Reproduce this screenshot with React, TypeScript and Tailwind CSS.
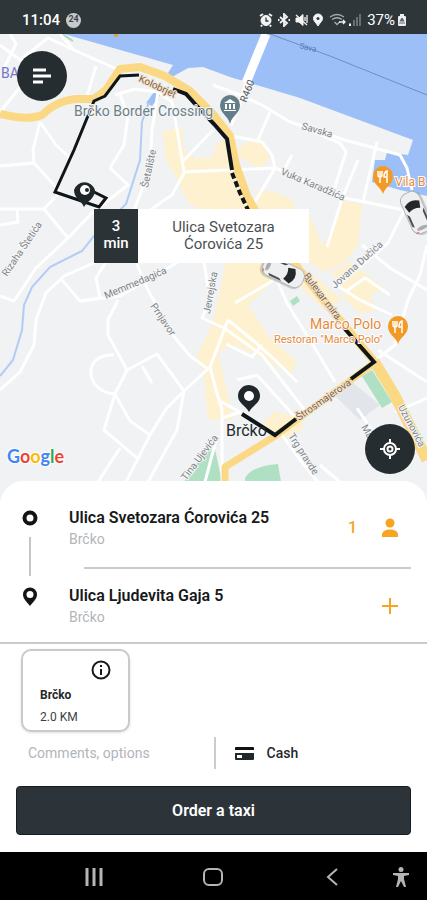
import React, { useState } from 'react';

const minorRoads = [
  'M0 45 L20 60 L48 38 L74 50 L110 66 L122 72',
  'M10 34 L16 44 L4 68',
  'M60 34 L74 50',
  'M96 66 L86 100',
  'M0 112 L30 75',
  'M40 122 L33 150 L34 163 L45 175 L60 192',
  'M40 122 L56 145 L72 160',
  'M0 166 L34 163',
  'M0 209 L44 209 L60 192',
  'M0 225 L18 222 L17 210',
  'M44 209 L68 238',
  'M110 168 L128 185 L92 213 L68 238 L36 268 L14 301 L0 296',
  'M110 168 L124 145 L128 115 L120 95',
  'M115 95 L135 89 L158 92 L172 102 L178 135 L184 172',
  'M158 92 L152 130 L150 168 L135 208 L96 262 L64 276 L46 293 L36 320 L34 345 L20 372 L0 390',
  'M62 280 L80 301 L100 298 L96 278 L106 262',
  'M80 301 L120 296 L178 262',
  'M118 300 L108 320 L108 335 L127 370 L115 394 L104 430 L137 458',
  'M114 355 C82 353 84 392 115 394',
  'M127 370 L157 354 L184 391 L210 367',
  'M136 262 L148 290 L172 334 L190 356 L208 369',
  'M142 366 L152 383',
  'M115 394 L130 421 L150 435',
  'M184 391 L166 409 L150 435 L126 482',
  'M184 391 L177 430 L148 482',
  'M120 448 L98 482',
  'M182 162 L213 130',
  'M184 172 L275 168 L345 198 L404 210',
  'M184 173 L172 195 L150 210',
  'M213 85 L240 95 L262 105 L290 122 L345 140 L400 155 L407 168 L412 190',
  'M270 112 L258 140',
  'M232 136 L262 142 L272 155 L275 168 L252 207',
  'M285 168 L292 155',
  'M300 126 L340 143 L346 152 L334 190',
  'M358 160 L342 199 L327 247',
  'M377 142 L363 202',
  'M404 211 L388 243 L335 288',
  'M362 245 L390 268 L427 290',
  'M427 245 L420 275 L408 300 L395 345 L376 360',
  'M333 283 L360 300 L392 315',
  'M345 292 L365 278 L390 295',
  'M274 280 L235 303',
  'M274 274 L288 305 L313 345 L335 382',
  'M204 262 L210 300 L202 318 L224 328 L262 355 L306 412',
  'M228 320 L210 367 L216 390 L222 410 L222 482',
  'M228 320 L255 342 L275 360 L297 382',
  'M226 344 L252 357 L262 345',
  'M237 380 L257 375 L296 418',
  'M218 400 L240 412 L222 418',
  'M280 432 L300 460 L318 482',
  'M320 465 L340 482',
  'M357 408 L375 435',
  'M378 350 L427 382',
  'M395 412 L427 398',
  'M205 482 L216 440',
];

const streetLabels = [
  { text: 'Savska', x: 301, y: 129, r: 16 },
  { text: 'Vuka Karadžića', x: 280, y: 174, r: 23 },
  { text: 'Jovana Dučića', x: 335, y: 289, r: -42 },
  { text: 'Rizaha Štetića', x: 7, y: 277, r: -56 },
  { text: 'Memmedagića', x: 106, y: 299, r: -23 },
  { text: 'Jevrejska', x: 210, y: 314, r: -80 },
  { text: 'Prnjavor', x: 150, y: 306, r: 56 },
  { text: 'Šetalište', x: 148, y: 188, r: -78 },
  { text: 'Tina Ujevića', x: 186, y: 481, r: -53 },
  { text: 'Trg pravde', x: 288, y: 436, r: 57 },
  { text: 'Uzunovića', x: 398, y: 407, r: 62 },
  { text: 'Marije', x: 361, y: 427, r: 60 },
];

const routeLabels = [
  { text: 'Kolobrjet', x: 138, y: 81, r: 25 },
  { text: 'Bulevar mira', x: 303, y: 276, r: 53 },
  { text: 'Štrosmajerova', x: 299, y: 421, r: -35 },
];

function Car() {
  return (
    <g>
      <rect x="-9" y="-21" width="21" height="44" rx="8" fill="#00000028" />
      <rect x="-10" y="-22" width="20" height="43" rx="8" fill="#eeeff0" stroke="#b4b7ba" strokeWidth="1" />
      <path d="M-8 -10 Q0 -16 8 -10 L6 -3 Q0 -6 -6 -3Z" fill="#24282b" />
      <path d="M-9 -2 L-7 1 V13 L-9 11Z M9 -2 L7 1 V13 L9 11Z" fill="#4a4f54" />
      <path d="M-5 15 Q0 13 5 15 L6 17 Q0 19 -6 17Z" fill="#a9adb1" />
      <path d="M-8 19 H-5 M5 19 H8" stroke="#dc7777" strokeWidth="1.5" />
    </g>
  );
}

function FoodPin() {
  return (
    <g>
      <path d="M0 15 C-2 8 -10 6 -10 -3 A10 10 0 0 1 10 -3 C10 6 2 8 0 15Z" fill="#f39a26" />
      <path d="M-5 -8 V-4 Q-5 -2 -3 -2 Q-1 -2 -1 -4 V-8 M-3 -8 V4 M4 4 V-8 Q1 -7 1 -2 H4" fill="none" stroke="#fff" strokeWidth="1.5" />
    </g>
  );
}

function CityMap() {
  return (
    <svg className="absolute inset-0 w-full h-full" viewBox="0 34 427 467" preserveAspectRatio="xMidYMin slice" fontFamily="Roboto, sans-serif" role="img" aria-label="Brčko">
      <rect x="0" y="34" width="427" height="467" fill="#f0f2f3" />

      {/* Built-up areas and parks */}
      <g fill="#fdf1cf">
        <path d="M163 131 L182 128 L184 150 L195 158 L212 158 L217 143 L226 138 L234 150 L238 185 L255 212 L205 212 L188 203 L181 188 L175 175 L166 160Z" />
        <path d="M236 150 L250 140 L265 145 L270 160 L260 168 L240 158Z" />
        <path d="M255 190 L275 192 L292 200 L295 209 L309 213 L322 245 L332 230 L343 200 L362 205 L358 245 L345 262 L325 272 L308 262 L290 225 L260 210Z" />
        <path d="M226 262 L270 262 L275 280 L248 305 L270 338 L297 361 L291 374 L262 358 L235 345 L218 352 L228 395 L233 420 L208 420 L204 375 L197 355 L212 325Z" />
        <path d="M298 285 L310 272 L342 300 L325 310Z" />
        <path d="M332 272 L350 262 L384 288 L370 295 L375 310 L360 314 L345 298Z" />
        <path d="M262 425 L275 411 L292 416 L304 424 L300 432 L280 440Z" />
      </g>
      <g fill="#b0e0c3">
        <path d="M213 440 L222 482 L184 482Z" />
        <path d="M245 478 Q252 466 278 464 L281 482 L245 482Z" />
        <path d="M362 376 L372 370 L392 402 L382 408Z" />
        <path d="M290 301 L297 296 L300 301 L293 306Z" />
      </g>
      <path d="M332 393 L352 382 L380 405 L360 420Z" fill="#e2e5e9" />

      {/* Sava and its stream */}
      <path d="M64 34 L173 65 L168 73 L172 77 L188 68 L203 67 L230 77 L300 98 L413 140 L408 155 L427 160 V34Z" fill="#9dbff8" />
      <path d="M375 160 L385 160 L387 152 L408 155 L427 150 V196 L400 190 L372 182Z" fill="#9dbff8" />
      <path d="M157 88 L164 90 L152 106 L146 103Z" fill="#9dbff8" />
      <path d="M149 102 L142 122 L140 160 L126 204 L94 236 L82 251 L50 267 L32 287 L24 305 L22 330 L13 360 L0 376" fill="none" stroke="#b3cbf7" strokeWidth="2" />
      <path d="M270 34 L330 56 L427 95" fill="none" stroke="#738dbc" strokeWidth="1" />
      <path d="M62 34 L73 41" fill="none" stroke="#a6d7c2" strokeWidth="2" />

      <g fill="none" stroke="#fff" strokeWidth="3" strokeLinejoin="round">
        {minorRoads.map((d) => <path key={d} d={d} />)}
      </g>
      <path d="M266 34 L246 83" stroke="#fff" strokeWidth="9" />
      <path d="M248 80 L231 125" stroke="#fff" strokeWidth="4" />

      {/* Main road */}
      <g fill="none" stroke="#fbd884" strokeLinejoin="round">
        <path d="M0 114 Q28 121 42 115 Q56 101 75 99 L94 99 L106 90 L120 69 L140 67 L165 76 L190 91 L213 114 L230 136 L236 165 L247 196 L258 215 L298 268 L330 308 L374 361" strokeWidth="8" />
        <path d="M374 361 L394 394 L427 460" strokeWidth="11" />
        <path d="M374 363 L275 436 L225 467 V484" strokeWidth="7" />
      </g>
      <circle cx="116" cy="35" r="2" fill="#ee9d30" />

      {/* Route */}
      <g fill="none" stroke="#101519" strokeWidth="4">
        <path d="M86 188 L106 198 L99 207 L55 192 L74 150 L94 101 L105 96 L120 76 L139 75" strokeWidth="3" />
        <path d="M173 89 L186 94 L196 105 L214 124 L227 139 L232 170" />
        <path d="M232 173 L240 193 L249 212" strokeDasharray="6 3" />
        <path d="M297 268 L345 330" strokeWidth="2" strokeDasharray="10 5" />
        <path d="M345 329 L374 362 L351 379" />
        <path d="M351 379 L296 419" strokeWidth="1" stroke="#92785c" />
        <path d="M296 419 L275 435 L242 414" />
      </g>

      <g fill="#7e8489" fontSize="10" stroke="#f5f6f7" strokeWidth="2" paintOrder="stroke">
        {streetLabels.map((l) => (
          <text key={l.text} transform={`translate(${l.x} ${l.y}) rotate(${l.r})`}>{l.text}</text>
        ))}
      </g>
      <g fill="#80614c" fontSize="10" stroke="#f4e6cf" strokeWidth="2" paintOrder="stroke">
        {routeLabels.map((l) => (
          <text key={l.text} transform={`translate(${l.x} ${l.y}) rotate(${l.r})`}>{l.text}</text>
        ))}
      </g>
      <text transform="translate(246 103) rotate(-68)" fontSize="10" fill="#50575c">R460</text>
      <text transform="translate(299 48) rotate(14)" fontSize="8" fill="#5279bd">Sava</text>
      <text x="1" y="78" fontSize="14" fill="#7577c9">BA</text>
      <text x="74" y="116" fontSize="14" fill="#6d7f88" stroke="#f5f6f7" strokeWidth="2" paintOrder="stroke">Brčko Border Crossing</text>
      <g fill="#e58a3c" stroke="#fff" strokeWidth="2" paintOrder="stroke">
        <text x="395" y="186" fontSize="12">Vila B</text>
        <text x="310" y="329" fontSize="14">Marco Polo</text>
        <text x="274" y="343" fontSize="11">Restoran "Marco Polo"</text>
      </g>

      {/* Border crossing marker */}
      <path d="M230 124 C228 115 220 114 220 105 A10 10 0 0 1 240 105 C240 114 232 115 230 124Z" fill="#647e89" />
      <path d="M224 103 L230 99 L236 103Z M225 104 H227 V109 H225Z M229 104 H231 V109 H229Z M233 104 H235 V109 H233Z M224 110 H236 V111 H224Z" fill="#fff" />

      <g transform="translate(383 179)"><FoodPin /></g>
      <g transform="translate(398 329)"><FoodPin /></g>
      <g transform="translate(416 213) rotate(-24)"><Car /></g>
      <g transform="translate(283 272) rotate(115)"><Car /></g>

      {/* Pickup and destination pins */}
      <path d="M84 207 C82 201 74 199 74 190 A11 11 0 0 1 95 190 C95 199 87 201 84 207Z" fill="#20272b" />
      <circle cx="85" cy="190" r="5" fill="#fff" />
      <circle cx="87" cy="190" r="2" fill="#20272b" />
      <path d="M249 412 C245 405 238 403 238 396 A11 11 0 0 1 260 396 C260 403 253 405 249 412Z" fill="#20272b" />
      <circle cx="249" cy="396" r="5" fill="#fff" />
      <text x="226" y="436" fontSize="16" fill="#252a2d">Brčko</text>

      <text x="7" y="463" fontSize="18" fontFamily="Lato, sans-serif" fontWeight="700" stroke="#fff" strokeWidth="2" paintOrder="stroke">
        <tspan fill="#4285f4">G</tspan><tspan fill="#ea4335">o</tspan><tspan fill="#fbbc05">o</tspan><tspan fill="#4285f4">g</tspan><tspan fill="#34a853">l</tspan><tspan fill="#ea4335">e</tspan>
      </text>
    </svg>
  );
}

function StatusBar() {
  return (
    <header className="h-[34px] shrink-0 bg-[#2e363a] text-white flex items-center justify-between pt-1.5 pl-[22px] pr-5">
      <div className="flex items-center gap-1.5">
        <span className="text-[15px] font-medium">11:04</span>
        <span className="size-[15px] rounded-full bg-[#c8cbcd] text-[#3c4347] text-[9px] font-bold flex items-center justify-center">24</span>
      </div>
      <div className="flex items-center gap-0.5">
        <svg width="102" height="14" viewBox="0 0 102 14" fill="none" stroke="#f3f4f4" aria-hidden="true">
          {/* alarm */}
          <circle cx="7" cy="7.5" r="5" fill="#f3f4f4" />
          <path d="M1 3 L4 1 M13 3 L10 1 M3 12 L2 13.5 M11 12 L12 13.5" strokeWidth="2" />
          <path d="M7 4.500V8H9.500" stroke="#2e363a" strokeWidth="1.300" />
          {/* bluetooth */}
          <path d="M21 4 L28 10 L25 13 V1 L28 4 L21 10" strokeWidth="1.800" />
          <path d="M19 7H20.500 M29.500 7H31" strokeWidth="2" />
          {/* muted */}
          <path d="M37 5 H40 L44 1.500 V12.500 L40 9 H37Z" fill="#f3f4f4" />
          <path d="M37 2 L48 12 M46 4 V8 M48 2 V10" strokeWidth="1.300" />
          {/* location */}
          <path d="M59 13 C57 9.500 54.500 8 54.500 5.500 A4.500 4.500 0 0 1 63.500 5.500 C63.500 8 61 9.500 59 13Z" fill="#f3f4f4" />
          <circle cx="59" cy="5.500" r="1.500" fill="#2e363a" stroke="none" />
          {/* wifi */}
          <path d="M71 4 Q78 -1 85 4 M73 6.500 Q78 3 83 6.500 M75.500 9 L78 11.500 L80.500 9" stroke="#a8adaf" strokeWidth="1.300" />
          <path d="M80 9H86 M84 7 L86 9 L84 11" strokeWidth="1.300" />
          {/* signal */}
          <path d="M91 13V10.500" strokeWidth="2" />
          <path d="M95 13V7 M98 13V4 M101 13V1" stroke="#697074" strokeWidth="2" />
        </svg>
        <span className="ml-1 text-[15px]">37%</span>
        <svg width="10" height="14" viewBox="0 0 10 14" aria-hidden="true">
          <path d="M3 1H7V3H8Q9 3 9 4V12Q9 13 8 13H2Q1 13 1 12V4Q1 3 2 3H3Z" fill="#eceeee" />
          <path d="M5 5L7 8H3Z M2 10H8" stroke="#60676b" fill="#60676b" />
        </svg>
      </div>
    </header>
  );
}

function EtaBubble() {
  return (
    <div className="absolute left-[94px] top-[175px] w-[215px] flex bg-white text-[15px] leading-[17px] text-center">
      <div className="w-11 py-[9px] bg-[#2c3337] text-white font-medium">
        3<br />min
      </div>
      <p className="flex-1 py-[10px] text-[#4a4f53]">
        Ulica Svetozara<br />Ćorovića 25
      </p>
    </div>
  );
}

type StopProps = {
  street: string;
  city: string;
};

function Stop({ street, city }: StopProps) {
  return (
    <button type="button" className="text-left">
      <span className="block text-base leading-[22px] font-semibold text-[#17191b]">{street}</span>
      <span className="block text-sm leading-5 text-[#b2b5ba]">{city}</span>
    </button>
  );
}

function Stops() {
  return (
    <section className="flex border-b-2 border-[#c9cace]">
      <div className="w-[59px] shrink-0 pt-[29px] flex flex-col items-center">
        <svg width="16" height="16" viewBox="0 0 16 16" aria-hidden="true">
          <circle cx="8" cy="8" r="5.500" fill="none" stroke="#121416" strokeWidth="4" />
        </svg>
        <div className="my-[11px] w-[2px] h-[39px] bg-[#c3c5ca]" />
        <svg width="16" height="19" viewBox="0 0 16 19" aria-hidden="true">
          <path d="M8 19 C5 15 1 12 1 7.500 A7 7 0 0 1 15 7.500 C15 12 11 15 8 19Z" fill="#121416" />
          <circle cx="8" cy="7.500" r="3.500" fill="#fff" />
        </svg>
      </div>
      <div className="flex-1 pl-[10px]">
        <div className="flex items-center justify-between pt-[26px] pb-[18px] pr-7">
          <Stop street="Ulica Svetozara Ćorovića 25" city="Brčko" />
          <button type="button" aria-label="Passengers" className="flex items-center gap-6 text-[#f5a51f]">
            <span className="text-base font-medium">1</span>
            <svg width="18" height="20" viewBox="0 0 18 20" fill="currentColor" aria-hidden="true">
              <circle cx="9" cy="5" r="4.500" />
              <path d="M1 19V17C1 13 5 11.500 9 11.500S17 13 17 17V19Z" />
            </svg>
          </button>
        </div>
        <div className="ml-[15px] mr-4 h-[2px] bg-[#c9cace]" />
        <div className="flex items-center justify-between pt-4 pb-[15px] pr-7">
          <Stop street="Ulica Ljudevita Gaja 5" city="Brčko" />
          <button type="button" aria-label="Add stop" className="text-[#f5a51f] px-px">
            <svg width="16" height="16" viewBox="0 0 16 16" stroke="currentColor" strokeWidth="2" aria-hidden="true">
              <path d="M8 0V16M0 8H16" />
            </svg>
          </button>
        </div>
      </div>
    </section>
  );
}

export default function App() {
  const [comment, setComment] = useState('');

  return (
    <div className="min-h-screen flex flex-col bg-white font-[Roboto,sans-serif]">
      <StatusBar />

      <main className="flex-1 flex flex-col">
        <div className="relative flex-1 min-h-[467px] overflow-hidden">
          <CityMap />
          <EtaBubble />
          <button type="button" aria-label="Menu" className="absolute left-[17px] top-[17px] size-[50px] rounded-full bg-[#262d31] flex items-center justify-center">
            <svg width="18" height="16" viewBox="0 0 18 16" stroke="#fff" strokeWidth="3" aria-hidden="true">
              <path d="M0 2H13M0 8H18M0 14H10" />
            </svg>
          </button>
          <button type="button" aria-label="My location" className="absolute right-3 bottom-[27px] size-[50px] rounded-full bg-[#262d31] flex items-center justify-center">
            <svg width="20" height="20" viewBox="0 0 20 20" fill="none" stroke="#fff" strokeWidth="2" aria-hidden="true">
              <circle cx="10" cy="10" r="6" />
              <circle cx="10" cy="10" r="2.500" />
              <path d="M10 0V4M10 16V20M0 10H4M16 10H20" />
            </svg>
          </button>
        </div>

        <div className="relative -mt-5 bg-white rounded-t-3xl">
          <Stops />

          <section className="pt-[5px] px-4 pb-[17px]">
            <button type="button" className="ml-[5px] w-[109px] h-[83px] rounded-[10px] border-2 border-[#cacaca] shadow-sm px-[17px] pt-[9px] text-left flex flex-col">
              <svg className="self-end" width="20" height="20" viewBox="0 0 20 20" fill="none" stroke="#17191b" strokeWidth="2" aria-hidden="true">
                <circle cx="10" cy="10" r="8.500" />
                <path d="M10 9V15M10 5V7" />
              </svg>
              <span className="mt-1.5 text-xs leading-[18px] font-bold text-[#25282a]">Brčko</span>
              <span className="mt-1 text-xs leading-[18px] text-[#3b3f42]">2.0 KM</span>
            </button>

            <div className="flex items-center h-[42px]">
              <input
                type="text"
                aria-label="Comments, options"
                placeholder="Comments, options"
                value={comment}
                onChange={(e) => setComment(e.target.value)}
                className="w-1/2 min-w-0 pl-3 text-sm outline-none placeholder:text-[#b2b5bb]"
              />
              <div className="w-[2px] h-8 bg-[#cbccd0]" />
              <button type="button" className="pl-[19px] flex items-center gap-[13px] text-sm font-medium text-[#25282a]">
                <svg width="19" height="15" viewBox="0 0 19 15" aria-hidden="true">
                  <path d="M0 2Q0 1 1 1H18Q19 1 19 2V4H0Z" fill="#101315" />
                  <path d="M0 7H19V13Q19 14 18 14H1Q0 14 0 13Z" fill="#20292e" />
                  <rect x="2" y="9" width="5" height="3" fill="#fff" />
                </svg>
                Cash
              </button>
            </div>

            <button type="button" className="mt-3 w-full h-[49px] rounded bg-[#2d3439] border border-[#171e23] text-white text-base font-semibold">
              Order a taxi
            </button>
          </section>
        </div>
      </main>

      <nav className="h-[49px] shrink-0 bg-black text-[#b5b5b5] grid grid-cols-[1fr_1fr_1fr_20px] items-center pl-[35px] pr-4">
        <button type="button" aria-label="Recent apps" className="justify-self-center">
          <svg width="18" height="18" viewBox="0 0 18 18" stroke="currentColor" strokeWidth="3" aria-hidden="true">
            <path d="M2 0V18M9 0V18M16 0V18" />
          </svg>
        </button>
        <button type="button" aria-label="Home" className="justify-self-center">
          <svg width="20" height="20" viewBox="0 0 20 20" fill="none" stroke="currentColor" strokeWidth="2" aria-hidden="true">
            <rect x="1" y="2" width="18" height="16" rx="5" />
          </svg>
        </button>
        <button type="button" aria-label="Back" className="justify-self-center">
          <svg width="12" height="18" viewBox="0 0 12 18" fill="none" stroke="currentColor" strokeWidth="2" aria-hidden="true">
            <path d="M11 1L2 9L11 17" />
          </svg>
        </button>
        <button type="button" aria-label="Accessibility" className="justify-self-center">
          <svg width="18" height="20" viewBox="0 0 18 20" fill="currentColor" aria-hidden="true">
            <circle cx="9" cy="2.500" r="2.500" />
            <path d="M1 6L17 6V8L12 9V12L14 20H12L9 14L6 20H4L6 12V9L1 8Z" />
          </svg>
        </button>
      </nav>
    </div>
  );
}
